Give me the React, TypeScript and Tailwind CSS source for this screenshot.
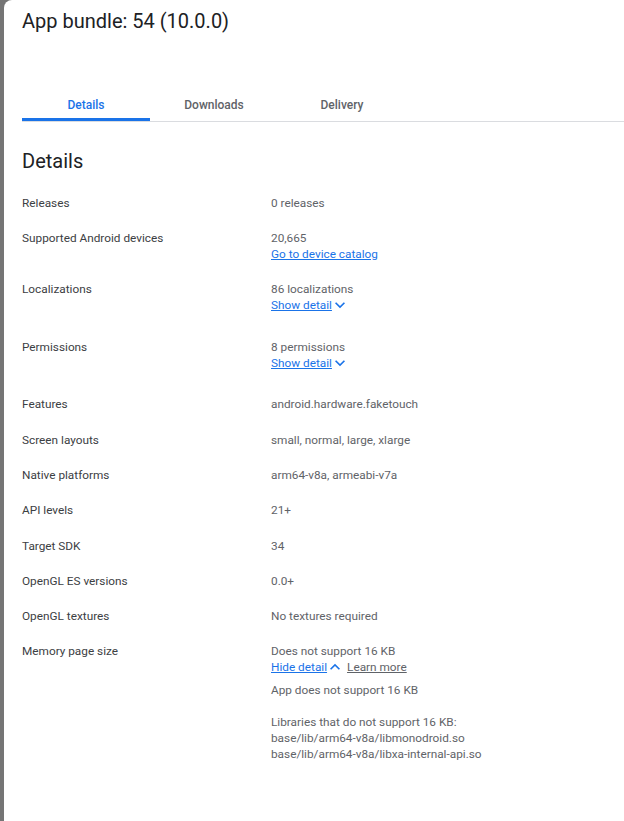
// ---- Data ----

type Row = {
  label: string
  value: string
  link?: string
  toggle?: 'show'
}

const rows: Row[] = [
  { label: 'Releases', value: '0 releases' },
  { label: 'Supported Android devices', value: '20,665', link: 'Go to device catalog' },
  { label: 'Localizations', value: '86 localizations', toggle: 'show' },
  { label: 'Permissions', value: '8 permissions', toggle: 'show' },
  { label: 'Features', value: 'android.hardware.faketouch' },
  { label: 'Screen layouts', value: 'small, normal, large, xlarge' },
  { label: 'Native platforms', value: 'arm64-v8a, armeabi-v7a' },
  { label: 'API levels', value: '21+' },
  { label: 'Target SDK', value: '34' },
  { label: 'OpenGL ES versions', value: '0.0+' },
  { label: 'OpenGL textures', value: 'No textures required' },
]

const tabs = ['Details', 'Downloads', 'Delivery']

// ---- Icons (material expand_more / expand_less) ----

function ExpandMore() {
  return (
    <svg width="20" height="20" viewBox="0 0 24 24" className="fill-[#1a73e8] -ml-[2px] shrink-0">
      <path d="M16.59 8.59L12 13.17 7.41 8.59 6 10l6 6 6-6z" />
    </svg>
  )
}

function ExpandLess() {
  return (
    <svg width="20" height="20" viewBox="0 0 24 24" className="fill-[#1a73e8] -ml-[2px] shrink-0">
      <path d="M12 8l-6 6 1.41 1.41L12 10.83l4.59 4.58L18 14z" />
    </svg>
  )
}

// ---- Rows ----

function DetailRow({ row }: { row: Row }) {
  return (
    <div className="grid grid-cols-[249px_1fr] py-[9.7px]">
      <div className="text-[#3c4043]">{row.label}</div>
      <div className="text-[#5f6368]">
        <div>{row.value}</div>
        {row.link && <div className="text-[#1a73e8] underline">{row.link}</div>}
        {row.toggle && (
          <div className="flex items-center h-4 mb-[6px]">
            <span className="text-[#1a73e8] underline">Show detail</span>
            <ExpandMore />
          </div>
        )}
      </div>
    </div>
  )
}

export default function App() {
  return (
    <div className="min-h-[821px] bg-[#757575] pl-[4px]" style={{ fontFamily: 'Roboto, "Noto Sans", sans-serif' }}>
      <div className="min-h-[821px] bg-white rounded-tl-[8px] pt-[7px]">
        <h1 className="px-[18px] text-[20px] leading-[28px] text-[#202124]">App bundle: 54 (10.0.0)</h1>

        <div className="mt-[62px] ml-[18px] flex border-b border-[#dadce0]">
          {tabs.map((t, i) => (
            <div key={t} className="w-[128px] flex flex-col items-center">
              <span className={`text-[12px] leading-4 font-medium ${i === 0 ? 'text-[#1a73e8]' : 'text-[#5f6368]'}`}>{t}</span>
              <div className={`mt-[5px] h-[3px] w-full ${i === 0 ? 'bg-[#1a73e8]' : 'bg-transparent'}`} />
            </div>
          ))}
        </div>

        <div className="px-[18px] pt-[25px] text-[11.8px] leading-4">
          <h2 className="text-[20px] leading-[28px] text-[#202124] mb-[10px]">Details</h2>

          {rows.map(r => (
            <DetailRow key={r.label} row={r} />
          ))}

          <div className="grid grid-cols-[249px_1fr] pt-[8.7px] pb-[10px]">
            <div className="text-[#3c4043]">Memory page size</div>
            <div className="text-[#5f6368]">
              <div>Does not support 16 KB</div>
              <div className="flex items-center h-4">
                <span className="text-[#1a73e8] underline">Hide detail</span>
                <ExpandLess />
                <span className="ml-[2px] underline">Learn more</span>
              </div>
              <div className="mt-[7px]">App does not support 16 KB</div>
              <div className="mt-4">Libraries that do not support 16 KB:</div>
              <div>base/lib/arm64-v8a/libmonodroid.so</div>
              <div>base/lib/arm64-v8a/libxa-internal-api.so</div>
            </div>
          </div>
        </div>
      </div>
    </div>
  )
}
